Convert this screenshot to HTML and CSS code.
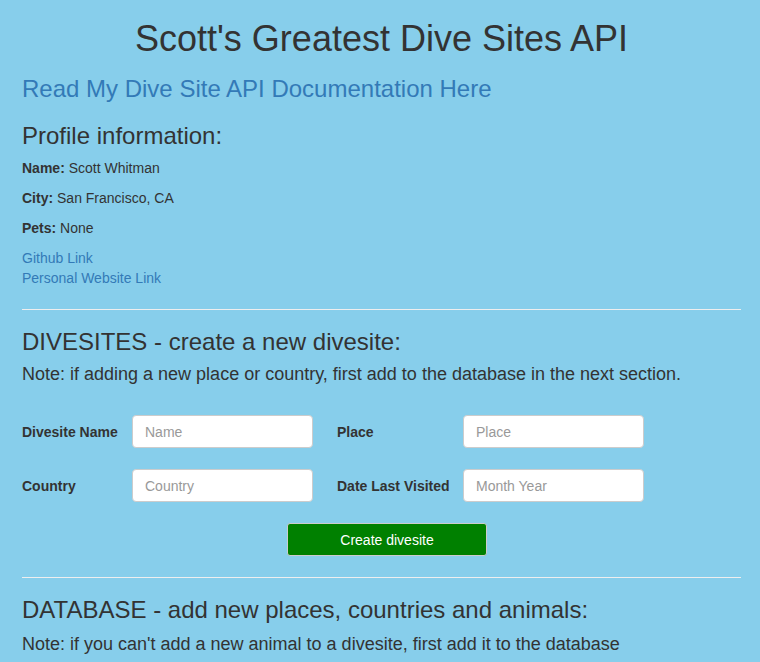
FILE: index.html
```html
<!DOCTYPE html>
<html>
<head>
<meta charset="utf-8">
<link rel="stylesheet" href="styles.css">
</head>
<body>
<div class="container">
  <h1 class="title">Scott's Greatest Dive Sites API</h1>
  <h3 class="doc"><a href="#">Read My Dive Site API Documentation Here</a></h3>
  <h3 class="heading">Profile information:</h3>
  <p class="info"><b>Name:</b> Scott Whitman</p>
  <p class="info"><b>City:</b> San Francisco, CA</p>
  <p class="info"><b>Pets:</b> None</p>
  <div class="links">
    <a href="#">Github Link</a>
    <a href="#">Personal Website Link</a>
  </div>
  <hr class="rule">
  <h3 class="heading section">DIVESITES - create a new divesite:</h3>
  <p class="note">Note: if adding a new place or country, first add to the database in the next section.</p>
  <form class="form">
    <label class="lbl">Divesite Name</label>
    <input class="field" type="text" placeholder="Name">
    <label class="lbl lbl-right">Place</label>
    <input class="field" type="text" placeholder="Place">
    <label class="lbl">Country</label>
    <input class="field" type="text" placeholder="Country">
    <label class="lbl lbl-right">Date Last Visited</label>
    <input class="field" type="text" placeholder="Month Year">
  </form>
  <div class="actions"><button class="btn" type="button">Create divesite</button></div>
  <hr class="rule">
  <h3 class="heading section">DATABASE - add new places, countries and animals:</h3>
  <p class="note note-low">Note: if you can't add a new animal to a divesite, first add it to the database</p>
</div>
</body>
</html>
```
FILE: styles.css
```css
html, body {
  margin: 0;
  padding: 0;
  background: #87ceeb;
}
body {
  font-family: "Liberation Sans", Arial, sans-serif;
  color: #333;
  font-size: 14px;
}
.container {
  padding: 0 19px 0 22px;
}
a {
  color: #337ab7;
  text-decoration: none;
}
.title {
  margin: 0;
  padding-top: 19px;
  font-size: 36px;
  font-weight: normal;
  line-height: 40px;
  text-align: center;
}
.doc {
  margin: 16px 0 0;
  font-size: 24px;
  font-weight: normal;
  line-height: 28px;
}
.heading {
  margin: 19px 0 0;
  font-size: 24px;
  font-weight: normal;
  line-height: 28px;
}
.heading.section {
  margin-top: 18px;
}
.info {
  margin: 0;
  line-height: 30px;
}
.info:first-of-type {
  margin-top: 3px;
}
.links {
  display: flex;
  flex-direction: column;
  line-height: 20px;
  margin-top: 5px;
}
.rule {
  border: 0;
  border-top: 1px solid #eee;
  margin: 21px 0 0;
  height: 0;
}
.note {
  margin: 6px 0 0;
  font-size: 18px;
  line-height: 24px;
}
.note-low {
  margin-top: 8px;
}
.form {
  display: grid;
  grid-template-columns: 110px 181px 150px 181px;
  row-gap: 21px;
  margin-top: 29px;
  align-items: center;
}
.lbl {
  font-weight: bold;
  font-size: 14px;
}
.lbl-right {
  margin-left: 24px;
}
.field {
  box-sizing: border-box;
  width: 181px;
  height: 33px;
  border: 1px solid #ccc;
  border-radius: 4px;
  padding: 6px 12px;
  font-family: "Liberation Sans", Arial, sans-serif;
  font-size: 14px;
  color: #555;
  background: #fff;
}
.field::placeholder {
  color: #999;
}
.actions {
  display: flex;
  justify-content: center;
  margin-top: 21px;
}
.btn {
  width: 200px;
  height: 33px;
  background: #008000;
  color: #fff;
  border: 1px solid #ccc;
  border-radius: 3px;
  font-family: "Liberation Sans", Arial, sans-serif;
  font-size: 14px;
  margin-left: 11px;
}
```
